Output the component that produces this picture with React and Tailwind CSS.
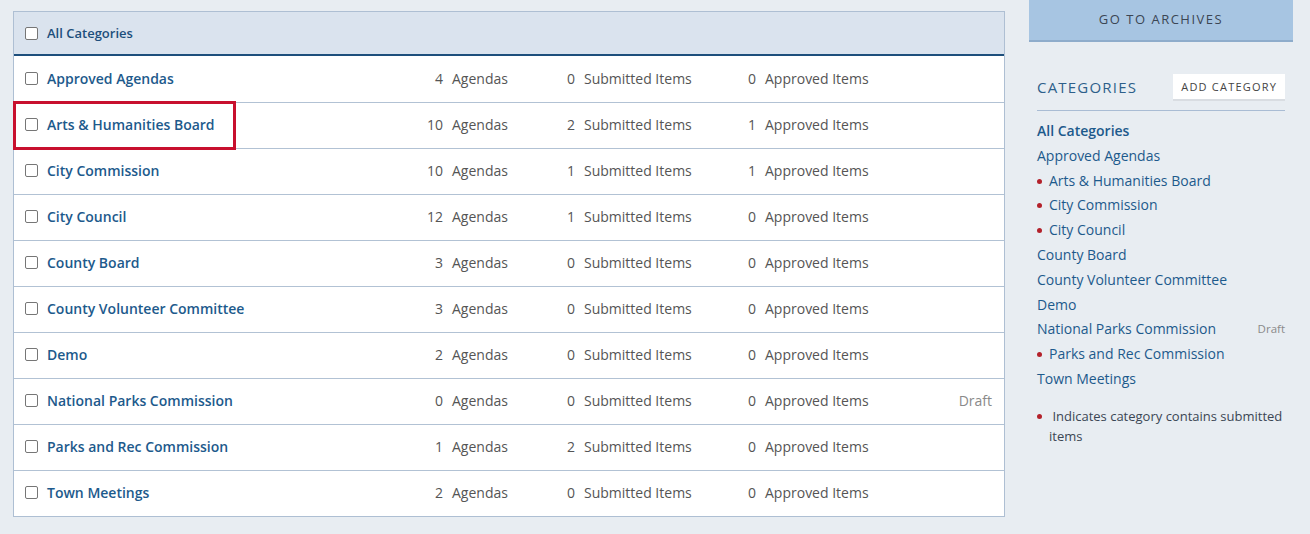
import React from "react";

const rows = [
    { name: "Approved Agendas", agendas: 4, submitted: 0, approved: 0 },
    { name: "Arts & Humanities Board", agendas: 10, submitted: 2, approved: 1, highlight: true },
    { name: "City Commission", agendas: 10, submitted: 1, approved: 1 },
    { name: "City Council", agendas: 12, submitted: 1, approved: 0 },
    { name: "County Board", agendas: 3, submitted: 0, approved: 0 },
    { name: "County Volunteer Committee", agendas: 3, submitted: 0, approved: 0 },
    { name: "Demo", agendas: 2, submitted: 0, approved: 0 },
    { name: "National Parks Commission", agendas: 0, submitted: 0, approved: 0, draft: true },
    { name: "Parks and Rec Commission", agendas: 1, submitted: 2, approved: 0 },
    { name: "Town Meetings", agendas: 2, submitted: 0, approved: 0 },
];

const sideItems = [
    { name: "Approved Agendas" },
    { name: "Arts & Humanities Board", dot: true },
    { name: "City Commission", dot: true },
    { name: "City Council", dot: true },
    { name: "County Board" },
    { name: "County Volunteer Committee" },
    { name: "Demo" },
    { name: "National Parks Commission", draft: true },
    { name: "Parks and Rec Commission", dot: true },
    { name: "Town Meetings" },
];

function Checkbox() {
    return <span className="block w-[13px] h-[13px] rounded-[2px] border border-[#767676] bg-white shrink-0" />;
}

function Dot() {
    return <span className="inline-block w-[5px] h-[5px] rounded-full bg-[#b3212b] mr-[7px] mb-[2px]" />;
}

function App() {
    return (
        <div className="w-[1310px] h-[534px] bg-[#e8edf2] flex items-start gap-[24px] pl-[13px] font-['Open_Sans',sans-serif]">
            <div className="mt-[11px] w-[992px] border border-[#aebfd3] bg-white">
                <div className="h-[44px] bg-[#dae3ee] border-b-2 border-[#1d4f7c] flex items-center pl-[11px] pt-[1px] gap-[9px]">
                    <Checkbox />
                    <span className="text-[13px] font-semibold text-[#1d4f7c]">All Categories</span>
                </div>
                {rows.map((row, i) => (
                    <div
                        key={row.name}
                        className={`h-[46px] flex items-center pb-[2px] text-[14px] ${i > 0 ? "border-t border-[#b2c2d4]" : ""}`}
                    >
                        <div className="flex items-center w-[389px] relative h-full">
                            {row.highlight && (
                                <span className="absolute left-[-1px] top-[-2px] w-[223px] h-[49px] border-[3px] border-[#c8102e]" />
                            )}
                            <div className="flex items-center pl-[11px] gap-[9px]">
                                <Checkbox />
                                <span className="font-semibold text-[#1d5a8c]">{row.name}</span>
                            </div>
                        </div>
                        <span className="w-[40px] text-right text-[#555]">{row.agendas}</span>
                        <span className="ml-[9px] w-[83px] text-[#555]">Agendas</span>
                        <span className="w-[40px] text-right text-[#555]">{row.submitted}</span>
                        <span className="ml-[9px] w-[132px] text-[#555]">Submitted Items</span>
                        <span className="w-[40px] text-right text-[#555]">{row.approved}</span>
                        <span className="ml-[9px] text-[#555]">Approved Items</span>
                        <span className="ml-auto pr-[12px] text-[#8a8a8a]">{row.draft ? "Draft" : ""}</span>
                    </div>
                ))}
            </div>

            <div className="w-[264px]">
                <button className="w-full h-[42px] bg-[#a7c5e2] border-b-2 border-[#8eaccb] text-[13px] tracking-[1.5px] text-[#3b4654]">
                    GO TO ARCHIVES
                </button>
                <div className="px-[8px] mt-[32px]">
                    <div className="flex items-center justify-between pb-[9px] border-b border-[#a9bcd4]">
                        <span className="text-[15px] tracking-[1.2px] text-[#2d5f8a]">CATEGORIES</span>
                        <span className="bg-white border-b-2 border-[#d9dde2] px-[8px] h-[27px] flex items-center pt-[2px] text-[11px] tracking-[1.2px] text-[#444]">
                            ADD CATEGORY
                        </span>
                    </div>
                    <div className="mt-[8px] text-[14px] leading-[24.8px] text-[#1d5a8c]">
                        <div className="font-semibold">All Categories</div>
                        {sideItems.map((item) => (
                            <div key={item.name} className="flex items-center">
                                <span>
                                    {item.dot && <Dot />}
                                    {item.name}
                                </span>
                                {item.draft && <span className="ml-auto text-[11.5px] text-[#8a8a8a]">Draft</span>}
                            </div>
                        ))}
                    </div>
                    <div className="mt-[14px] text-[13px] leading-[20px] text-[#3b4654]">
                        <Dot /> Indicates category contains submitted
                        <div className="pl-[12px]">items</div>
                    </div>
                </div>
            </div>
        </div>
    );
}

export default App;
